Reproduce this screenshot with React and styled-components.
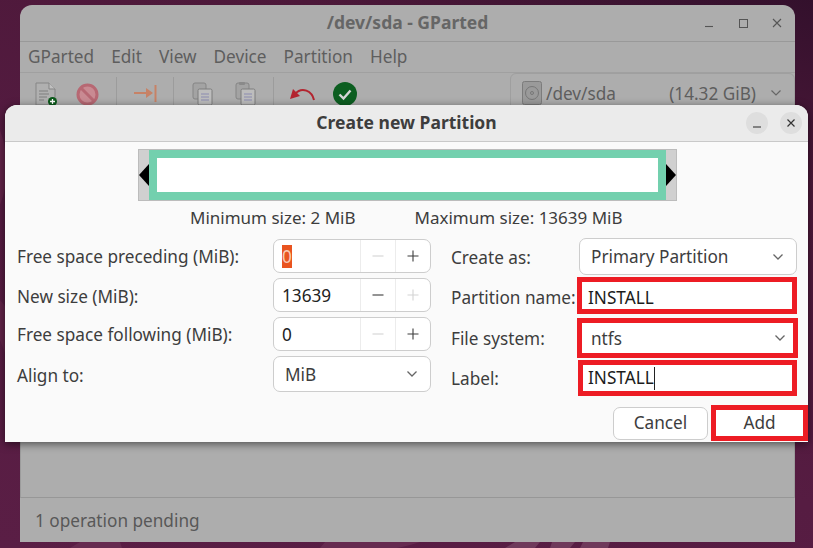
import React from "react";
import styled, { createGlobalStyle } from "styled-components";

const Global = createGlobalStyle`
  html, body { margin: 0; padding: 0; width: 813px; height: 548px; overflow: hidden; }
  * { box-sizing: border-box; }
`;

const Desktop = styled.div`
  position: relative;
  width: 813px;
  height: 548px;
  overflow: hidden;
  background: linear-gradient(200deg, #33102c 0%, #4c1839 22%, #561c42 60%, #5a1e45 100%);
  font-family: "Noto Sans", sans-serif;
  font-size: 17.2px;
`;
const Petals = styled.svg`
  position: absolute;
  inset: 0;
`;
const MainWindow = styled.div`
  position: absolute;
  left: 20px;
  top: 5px;
  width: 775px;
  height: 537px;
  background: #adadad;
  border-radius: 12px 12px 0 0;
  display: flex;
  flex-direction: column;
  color: #565656;
`;
const MainTitleBar = styled.div`
  height: 37px;
  flex: none;
  border-bottom: 1px solid #999;
  display: flex;
  align-items: center;
  justify-content: center;
  padding-bottom: 2px;
  font-weight: 700;
  color: #666;
  font-size: 17.5px;
  position: relative;
`;
const MainControls = styled.div`
  position: absolute;
  right: 11px;
  top: 0;
  height: 36px;
  display: flex;
  align-items: center;
  gap: 16px;
`;
const MenuBar = styled.div`
  height: 31px;
  flex: none;
  border-bottom: 1px solid #a0a0a0;
  display: flex;
  align-items: center;
  padding: 0 0 1px 8px;
  gap: 17px;
  color: #5e5e5e;
`;
const Toolbar = styled.div`
  height: 32px;
  flex: none;
  display: flex;
  align-items: flex-start;
  position: relative;
`;
const ToolIcon = styled.svg`
  flex: none;
  margin-left: ${(p) => p.$ml}px;
  margin-top: ${(p) => p.$mt}px;
`;
const ToolSep = styled.div`
  flex: none;
  width: 1px;
  height: 28px;
  margin-top: 4px;
  margin-left: ${(p) => p.$ml}px;
  background: #9c9c9c;
`;
const DeviceCombo = styled.div`
  margin-left: auto;
  width: 285px;
  height: 40px;
  border: 1px solid #9f9f9f;
  border-radius: 6px;
  display: flex;
  align-items: center;
  padding: 0 12px 0 11px;
  color: #5e5e5e;
`;
const DeviceName = styled.span`
  margin-left: 4px;
  flex: 1;
`;
const Workspace = styled.div`
  flex: 1;
  border-left: 1px solid #9c9c9c;
  border-right: 1px solid #9c9c9c;
  border-bottom: 1px solid #979797;
`;
const StatusBar = styled.div`
  height: 44px;
  flex: none;
  display: flex;
  align-items: center;
  padding-left: 15px;
  color: #585858;
`;
const Dialog = styled.div`
  position: absolute;
  left: 5px;
  top: 105px;
  width: 803px;
  height: 337px;
  background: #fafafa;
  border-radius: 12px 12px 0 0;
  box-shadow: 0 2px 8px rgba(0, 0, 0, 0.55);
  display: flex;
  flex-direction: column;
  color: #3d3d3d;
`;
const DialogHeader = styled.div`
  height: 37px;
  flex: none;
  background: #ebebeb;
  border-bottom: 1px solid #c9c9c9;
  border-radius: 12px 12px 0 0;
  display: flex;
  align-items: center;
  justify-content: center;
  padding-bottom: 3px;
  font-weight: 700;
  font-size: 17.5px;
  color: #3d3d3d;
  position: relative;
`;
const HeaderControls = styled.div`
  position: absolute;
  right: 6px;
  top: 7px;
  display: flex;
  gap: 12px;
`;
const RoundButton = styled.div`
  width: 22px;
  height: 22px;
  border-radius: 50%;
  background: #dedede;
  display: flex;
  align-items: center;
  justify-content: center;
`;
const BarRow = styled.div`
  margin: 7px 0 0 133px;
  width: 539px;
  height: 52px;
  background: #d0d0d0;
  border: 1px solid #bcbcbc;
  display: flex;
  align-items: stretch;
  flex: none;
`;
const Handle = styled.div`
  width: 10px;
  flex: none;
  display: flex;
  align-items: center;
  justify-content: center;
`;
const Partition = styled.div`
  flex: 1;
  background: #fff;
  border: 8px solid #73d0ae;
`;
const InfoRow = styled.div`
  height: 33px;
  flex: none;
  display: flex;
  align-items: center;
  padding-left: 185px;
  gap: 59px;
  font-size: 17px;
  color: #3d3d3d;
`;
const Form = styled.div`
  display: flex;
  flex: none;
  height: 163px;
`;
const LeftColumn = styled.div`
  width: 426px;
  flex: none;
  padding: 5px 0 0 12px;
  display: flex;
  flex-direction: column;
  gap: 5px;
`;
const RightColumn = styled.div`
  flex: 1;
  padding: 4px 0 0 20px;
  display: flex;
  flex-direction: column;
`;
const Row = styled.div`
  display: flex;
  align-items: center;
  height: ${(p) => p.$h}px;
  margin-top: ${(p) => p.$mt || 0}px;
`;
const Label = styled.div`
  width: ${(p) => p.$w}px;
  flex: none;
  white-space: nowrap;
  padding-top: ${(p) => p.$pt || 0}px;
`;
const Spin = styled.div`
  width: 158px;
  height: 34px;
  background: #fff;
  border: 1px solid #cdcdcd;
  border-radius: 7px;
  display: flex;
  align-items: stretch;
`;
const SpinValue = styled.div`
  flex: 1;
  display: flex;
  align-items: center;
  padding-left: 8px;
  color: #222;
`;
const Selected = styled.span`
  display: block;
  background: #e95420;
  color: #f7c9b5;
  height: 23px;
  line-height: 23px;
  width: 10px;
  overflow: hidden;
`;
const SpinButton = styled.div`
  width: 35px;
  flex: none;
  border-left: 1px solid #ececec;
  display: flex;
  align-items: center;
  justify-content: center;
`;
const Combo = styled.div`
  width: ${(p) => p.$w}px;
  height: ${(p) => p.$h}px;
  background: #fff;
  border: 1px solid #cdcdcd;
  border-radius: 7px;
  display: flex;
  align-items: center;
  justify-content: space-between;
  padding: 0 12px 0 11px;
  color: #3d3d3d;
`;
const MarkedField = styled.div`
  width: ${(p) => p.$w}px;
  height: ${(p) => p.$h}px;
  background: #fff;
  border: 5px solid #ed1c24;
  display: flex;
  align-items: center;
  justify-content: space-between;
  padding: ${(p) => p.$pt || 0}px ${(p) => p.$pr || 6}px 0 ${(p) => p.$pl || 6}px;
  color: ${(p) => p.$color || "#1c1c1c"};
`;
const Caret = styled.span`
  display: inline-block;
  width: 1px;
  height: 23px;
  background: #222;
  vertical-align: middle;
`;
const Footer = styled.div`
  display: flex;
  align-items: center;
  height: 36px;
  padding-left: 608px;
  margin-top: 8px;
`;
const Button = styled.div`
  width: 95px;
  height: 33px;
  background: #fff;
  border: 1px solid #cdcdcd;
  border-radius: 7px;
  display: flex;
  align-items: center;
  justify-content: center;
  padding-bottom: 2px;
  color: #3d3d3d;
`;
const MarkedButton = styled.div`
  width: 97px;
  height: 36px;
  margin-left: 3px;
  background: #fff;
  border: 5px solid #ed1c24;
  display: flex;
  align-items: center;
  justify-content: center;
  padding-bottom: 2px;
  color: #3d3d3d;
`;

const Chevron = ({ color = "#666" }) => (
  <svg width="12" height="8" viewBox="0 0 12 8">
    <path d="M1.5 1.5 L6 6 L10.5 1.5" fill="none" stroke={color} strokeWidth="1.3" />
  </svg>
);
const Plus = ({ color = "#3d3d3d" }) => (
  <svg width="12" height="12" viewBox="0 0 12 12">
    <path d="M6 0.5V11.5M0.5 6H11.5" stroke={color} strokeWidth="1.1" />
  </svg>
);
const Minus = ({ color = "#3d3d3d" }) => (
  <svg width="12" height="12" viewBox="0 0 12 12">
    <path d="M0.5 6H11.5" stroke={color} strokeWidth="1.1" />
  </svg>
);

const CopyGlyph = () => (
  <g>
    <rect x="1" y="1" width="13" height="16" rx="2" fill="#a3a3a3" stroke="#858585" />
    <rect x="6" y="7" width="14" height="16" rx="1.5" fill="#bdbdbd" stroke="#7d7d7d" />
    <path d="M9 12h8M9 15h8M9 18h8" stroke="#8b8bb0" strokeWidth="1" />
  </g>
);

export default function App() {
  return (
    <Desktop>
      <Global />
      <Petals width="813" height="548" viewBox="0 0 813 548">
        <path d="M0 130 Q14 170 0 205 Z M0 300 Q18 320 20 350 L20 400 Q8 360 0 340 Z" fill="#622449" />
        <path d="M505 548 L515 542 H540 L535 548 Z M550 548 L552 542 H575 L570 548 Z M580 548 L583 542 H610 L608 548 Z" fill="#6f3a5b" />
        <path d="M70 548 L80 542 H120 L122 548 Z M320 548 L325 542 H420 Q400 548 395 548 Z" fill="#662b50" />
      </Petals>
      <MainWindow>
        <MainTitleBar>
          /dev/sda - GParted
          <MainControls>
            <svg width="14" height="14" viewBox="0 0 14 14">
              <path d="M3 10.5H11" stroke="#555" strokeWidth="1.1" />
            </svg>
            <svg width="22" height="14" viewBox="0 0 22 14">
              <rect x="7.5" y="3.5" width="8" height="8" fill="none" stroke="#555" strokeWidth="1" />
            </svg>
            <svg width="14" height="14" viewBox="0 0 14 14">
              <path d="M3 3L11 11M11 3L3 11" stroke="#555" strokeWidth="1.1" />
            </svg>
          </MainControls>
        </MainTitleBar>
        <MenuBar>
          <span>GParted</span>
          <span>Edit</span>
          <span>View</span>
          <span>Device</span>
          <span>Partition</span>
          <span>Help</span>
        </MenuBar>
        <Toolbar>
          <ToolIcon $ml={15} $mt={9} width="23" height="24" viewBox="0 0 23 24">
            <path d="M1 1H14L20 7V23H1Z" fill="#b0b0b0" stroke="#858585" />
            <path d="M14 1V7H20" fill="#c0c0c0" stroke="#858585" />
            <path d="M4 9H13M4 12H14M4 15H12M4 18H9" stroke="#7f7f7f" />
            <circle cx="17.5" cy="19.5" r="4.5" fill="#0b5a1a" />
            <path d="M15 19.5H20M17.5 17V22" stroke="#fff" strokeWidth="1.3" />
          </ToolIcon>
          <ToolIcon $ml={18} $mt={10} width="23" height="23" viewBox="0 0 23 23">
            <circle cx="11.5" cy="11.5" r="9.5" fill="#c98a92" stroke="#b76873" strokeWidth="3" />
            <path d="M5 5L18 18" stroke="#b76873" strokeWidth="3" />
          </ToolIcon>
          <ToolSep $ml={17} />
          <ToolIcon $ml={17} $mt={11} width="23" height="20" viewBox="0 0 23 20">
            <path d="M0 9H14" stroke="#c78266" strokeWidth="2" />
            <path d="M12 4L19 9L12 14Z" fill="#c78266" />
            <path d="M21.5 1V18" stroke="#c78266" strokeWidth="2" />
          </ToolIcon>
          <ToolSep $ml={16} />
          <ToolIcon $ml={18} $mt={9} width="21" height="24" viewBox="0 0 21 24">
            <CopyGlyph />
          </ToolIcon>
          <ToolIcon $ml={22} $mt={9} width="21" height="24" viewBox="0 0 21 24">
            <CopyGlyph />
            <rect x="4" y="0" width="6" height="3" rx="1" fill="#8a8a8a" />
          </ToolIcon>
          <ToolSep $ml={17} />
          <ToolIcon $ml={16} $mt={11} width="25" height="19" viewBox="0 0 25 19">
            <path d="M24 16C22 7 12 2 5 10" fill="none" stroke="#b3242f" strokeWidth="2" />
            <path d="M0 15L3 5L10 12Z" fill="#b3242f" />
          </ToolIcon>
          <ToolIcon $ml={18} $mt={9} width="24" height="24" viewBox="0 0 24 24">
            <circle cx="12" cy="12" r="12" fill="#0c5e20" />
            <path d="M6.5 12.5L10.5 16.5L17.5 8.5" fill="none" stroke="#d6d6d6" strokeWidth="2.4" />
          </ToolIcon>
          <DeviceCombo>
            <svg width="20" height="24" viewBox="0 0 20 24">
              <rect x="0.5" y="0.5" width="19" height="23" rx="2" fill="#9a9a9a" stroke="#7c7c7c" />
              <circle cx="10" cy="12" r="6.5" fill="none" stroke="#777" />
              <circle cx="10" cy="12" r="1.5" fill="none" stroke="#777" />
            </svg>
            <DeviceName>/dev/sda</DeviceName>
            <span>(14.32 GiB)</span>
            <svg width="12" height="8" viewBox="0 0 12 8" style={{ marginLeft: 14 }}>
              <path d="M1.5 1.5 L6 6 L10.5 1.5" fill="none" stroke="#666" strokeWidth="1.2" />
            </svg>
          </DeviceCombo>
        </Toolbar>
        <Workspace />
        <StatusBar>1 operation pending</StatusBar>
      </MainWindow>

      <Dialog>
        <DialogHeader>
          Create new Partition
          <HeaderControls>
            <RoundButton>
              <svg width="12" height="12" viewBox="0 0 12 12">
                <path d="M2 10H10" stroke="#444" strokeWidth="1.2" />
              </svg>
            </RoundButton>
            <RoundButton>
              <svg width="12" height="12" viewBox="0 0 12 12">
                <path d="M2.5 2.5L9.5 9.5M9.5 2.5L2.5 9.5" stroke="#333" strokeWidth="1.2" />
              </svg>
            </RoundButton>
          </HeaderControls>
        </DialogHeader>
        <BarRow>
          <Handle>
            <svg width="10" height="22" viewBox="0 0 10 22">
              <path d="M10 0V22L0 11Z" fill="#000" />
            </svg>
          </Handle>
          <Partition />
          <Handle>
            <svg width="10" height="22" viewBox="0 0 10 22">
              <path d="M0 0V22L10 11Z" fill="#000" />
            </svg>
          </Handle>
        </BarRow>
        <InfoRow>
          <span>Minimum size: 2 MiB</span>
          <span>Maximum size: 13639 MiB</span>
        </InfoRow>
        <Form>
          <LeftColumn>
            <Row $h={34}>
              <Label $w={256}>Free space preceding (MiB):</Label>
              <Spin>
                <SpinValue>
                  <Selected>0</Selected>
                </SpinValue>
                <SpinButton><Minus color="#d4d4d4" /></SpinButton>
                <SpinButton><Plus /></SpinButton>
              </Spin>
            </Row>
            <Row $h={34}>
              <Label $w={256} $pt={2}>New size (MiB):</Label>
              <Spin>
                <SpinValue>13639</SpinValue>
                <SpinButton><Minus /></SpinButton>
                <SpinButton><Plus color="#d4d4d4" /></SpinButton>
              </Spin>
            </Row>
            <Row $h={34}>
              <Label $w={256}>Free space following (MiB):</Label>
              <Spin>
                <SpinValue>0</SpinValue>
                <SpinButton><Minus color="#d4d4d4" /></SpinButton>
                <SpinButton><Plus /></SpinButton>
              </Spin>
            </Row>
            <Row $h={36}>
              <Label $w={256} $pt={2}>Align to:</Label>
              <Combo $w={158} $h={36}>
                MiB
                <Chevron />
              </Combo>
            </Row>
          </LeftColumn>
          <RightColumn>
            <Row $h={37}>
              <Label $w={128} $pt={2}>Create as:</Label>
              <Combo $w={218} $h={37}>
                Primary Partition
                <Chevron />
              </Combo>
            </Row>
            <Row $h={37} $mt={2}>
              <Label $w={126} $pt={3}>Partition name:</Label>
              <MarkedField $w={220} $h={37} $pt={3}>INSTALL</MarkedField>
            </Row>
            <Row $h={40} $mt={4}>
              <Label $w={126}>File system:</Label>
              <MarkedField $w={221} $h={40} $pl={9} $pr={7} $color="#3d3d3d">
                ntfs
                <Chevron />
              </MarkedField>
            </Row>
            <Row $h={36} $mt={2}>
              <Label $w={127}>Label:</Label>
              <MarkedField $w={219} $h={36} $pl={5}>
                <span>INSTALL<Caret /></span>
              </MarkedField>
            </Row>
          </RightColumn>
        </Form>
        <Footer>
          <Button>Cancel</Button>
          <MarkedButton>Add</MarkedButton>
        </Footer>
      </Dialog>
    </Desktop>
  );
}
